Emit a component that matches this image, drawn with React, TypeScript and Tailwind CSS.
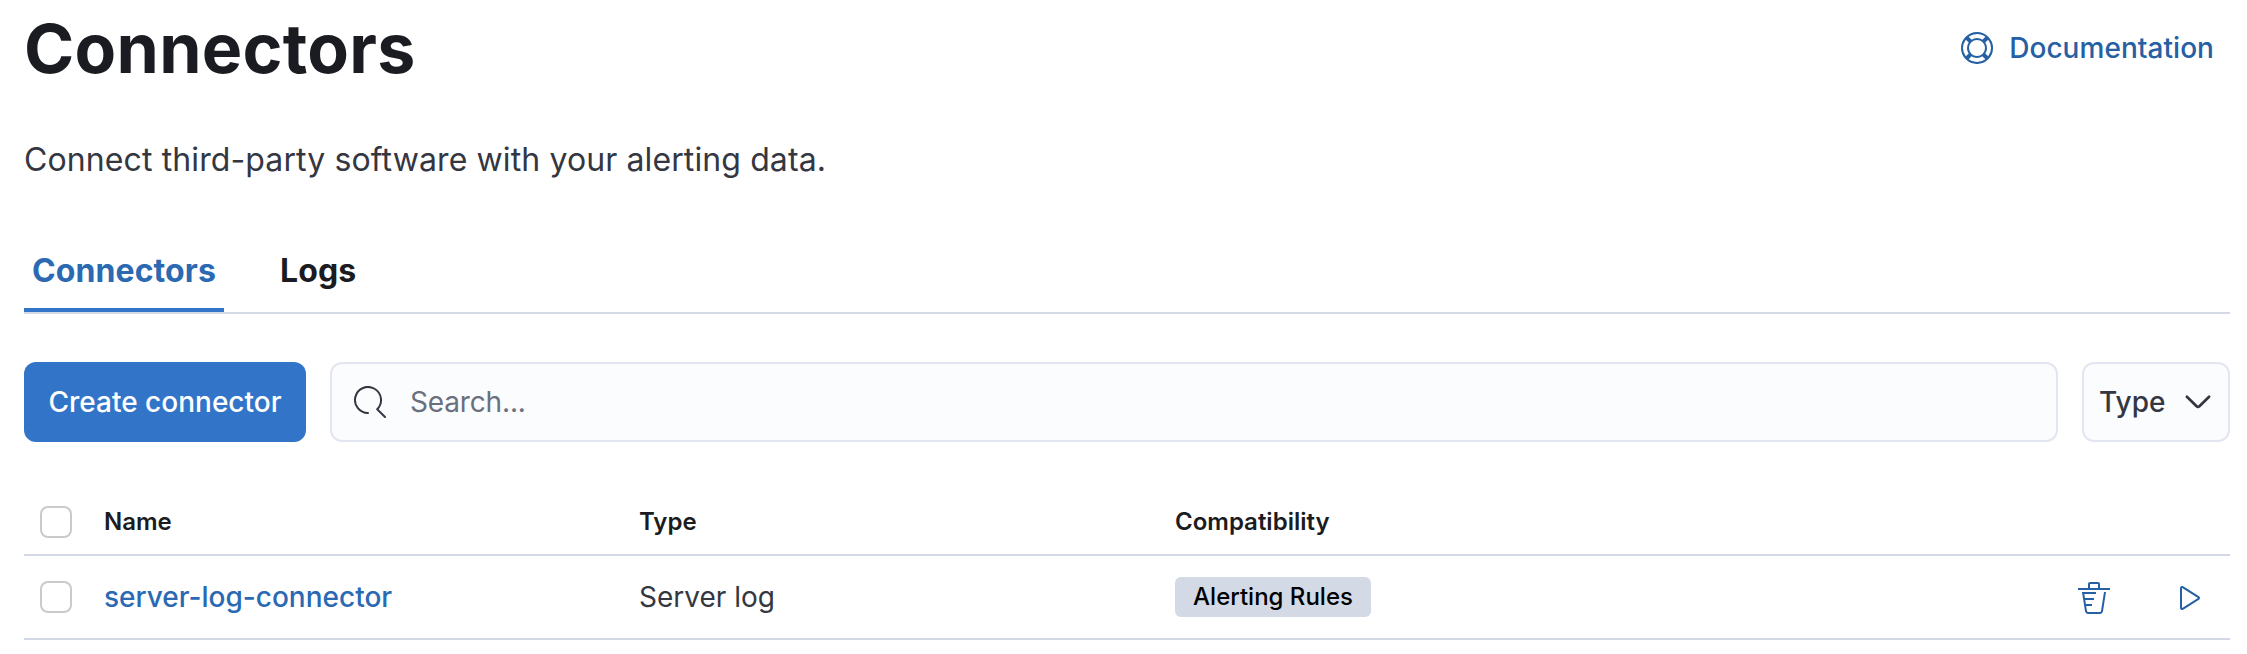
import React from "react";

type IconProps = { className?: string };

function HelpIcon({ className }: IconProps) {
  return (
    <svg viewBox="0 0 16 16" fill="currentColor" className={className} aria-hidden="true">
      <path d="M13.6 12.186l-1.357-1.358c-.025-.025-.058-.034-.084-.056.53-.794.84-1.746.84-2.773a4.977 4.977 0 00-.84-2.772c.026-.02.059-.03.084-.056L13.6 3.813a6.96 6.96 0 010 8.373zM8 15a6.956 6.956 0 01-4.186-1.4l1.358-1.358c.025-.025.035-.057.055-.084C6.02 12.688 6.974 13 8 13a4.978 4.978 0 002.773-.84c.02.026.03.058.056.083l1.357 1.358A6.956 6.956 0 018 15zm-5.601-2.813a6.963 6.963 0 010-8.373l1.359 1.358c.024.025.057.035.084.055A4.97 4.97 0 003 8c0 1.027.31 1.98.842 2.773-.027.022-.06.031-.084.056l-1.36 1.358zm5.6-.187A4 4 0 118 4a4 4 0 010 8zM8 1c1.573 0 3.019.525 4.187 1.4l-1.357 1.358c-.025.025-.035.057-.056.084A4.979 4.979 0 008 3a4.979 4.979 0 00-2.773.842c-.021-.027-.03-.059-.055-.084L3.814 2.4A6.957 6.957 0 018 1zm0-1a8.001 8.001 0 10.003 16.002A8.001 8.001 0 008 0z" />
    </svg>
  );
}

function SearchIcon({ className }: IconProps) {
  return (
    <svg viewBox="0 0 16 16" fill="none" stroke="currentColor" strokeLinecap="round" strokeLinejoin="round" className={className} aria-hidden="true">
      <path d="M7 13.5A6.5 6.5 0 1 1 11.6 11.6L15.5 15.5" />
    </svg>
  );
}

function ChevronIcon({ className }: IconProps) {
  return (
    <svg viewBox="0 0 16 16" fill="none" stroke="currentColor" strokeWidth="1.35" strokeLinecap="round" strokeLinejoin="round" className={className} aria-hidden="true">
      <path d="M2.45 5.4L7.3 10.1a1 1 0 0 0 1.4 0L13.55 5.4" />
    </svg>
  );
}

function TrashIcon({ className }: IconProps) {
  return (
    <svg viewBox="0 0 16 16" fill="currentColor" className={className} aria-hidden="true">
      <path d="M11 3h5v1H0V3h5V1a1 1 0 011-1h4a1 1 0 011 1v2zm-7.056 8H7v1H4.1l.392 2.519c.042.269.254.458.493.458h6.03c.239 0 .451-.189.493-.458l1.498-9.576H14l-1.504 9.73c-.116.747-.74 1.304-1.481 1.304h-6.03c-.741 0-1.365-.557-1.481-1.304l-1.511-9.73H9V5.95H3.157L3.476 8H8v1H3.632l.312 2zM6 3h4V1H6v2z" />
    </svg>
  );
}

function PlayIcon({ className }: IconProps) {
  return (
    <svg viewBox="0 0 16 16" fill="none" stroke="currentColor" strokeLinejoin="round" className={className} aria-hidden="true">
      <path d="M3.5 3v10a.55.55 0 0 0 .85.46l7.9-5a.55.55 0 0 0 0-.92l-7.9-5A.55.55 0 0 0 3.5 3z" />
    </svg>
  );
}

function Checkbox() {
  return <span role="checkbox" aria-checked="false" className="block size-8 shrink-0 rounded-lg border-2 border-[#cacaca] bg-white" />;
}

export default function App() {
  return (
    <main className="flex h-[654px] w-full flex-col bg-white pr-[17px] pl-6 font-['Inter',sans-serif] text-[#343741]">
      <header className="flex h-24 items-center justify-between pr-4">
        <h1 className="text-[68px] leading-none font-bold tracking-[0.004em] text-[#1a1c21]">Connectors</h1>
        <a className="flex items-center gap-4 text-[28px] leading-10 font-medium tracking-[0.05px] text-[#2560a4]">
          <HelpIcon className="size-8" />
          <span>Documentation</span>
        </a>
      </header>
      <p className="mt-10 text-[32px] leading-[48px] tracking-[0.11px]">Connect third-party software with your alerting data.</p>

      <nav className="mt-[50px] flex h-20 gap-10 border-b-2 border-[#d3dae6] text-[32px] leading-[48px] font-bold tracking-[0.1px]">
        <a className="flex h-[78px] w-[200px] items-center justify-center border-b-4 border-[#3275c8] text-[#2b69b3]">Connectors</a>
        <a className="flex h-[78px] items-center border-b-4 border-transparent px-4 text-[#1a1c21]">Logs</a>
      </nav>

      <div className="mt-12 flex h-20 shrink-0 gap-6 text-[28px] font-medium">
        <button className="w-[282px] rounded-xl bg-[#3275c8] text-white">Create connector</button>
        <div className="flex flex-1 items-center gap-6 rounded-xl border-2 border-[#e3e5f1] bg-[#fbfcfe] px-[22px]">
          <SearchIcon className="size-8" />
          <span className="font-normal tracking-[-0.15px] text-[#69707d]">Search...</span>
        </div>
        <button className="flex w-[148px] items-center justify-between rounded-xl border-2 border-[#e3e5f1] bg-[#fbfcfe] pr-3.5 pl-[15px]">
          <span>Type</span>
          <ChevronIcon className="size-8" />
        </button>
      </div>

      <section className="mt-[46px]">
        <div className="flex h-[68px] items-center border-b-2 border-[#d3d8e6] pt-px pl-4 text-2xl font-semibold text-[#1a1c21]">
          <Checkbox />
          <span className="ml-8 w-[535px]">Name</span>
          <span className="w-[536px]">Type</span>
          <span>Compatibility</span>
        </div>
        <div className="flex h-[84px] items-center border-b-2 border-[#d3d8e6] pl-4 text-[28px]">
          <Checkbox />
          <a className="ml-8 w-[535px] font-medium text-[#2b69b3]">server-log-connector</a>
          <span className="w-[536px]">Server log</span>
          <span className="flex h-10 w-[196px] items-center justify-center rounded-md bg-[#d3dae6] text-2xl font-medium text-black">Alerting Rules</span>
          <div className="ml-auto flex gap-16 pt-0.5 pr-6 text-[#2560a4]">
            <TrashIcon className="size-8" />
            <PlayIcon className="size-8" />
          </div>
        </div>
      </section>
    </main>
  );
}
